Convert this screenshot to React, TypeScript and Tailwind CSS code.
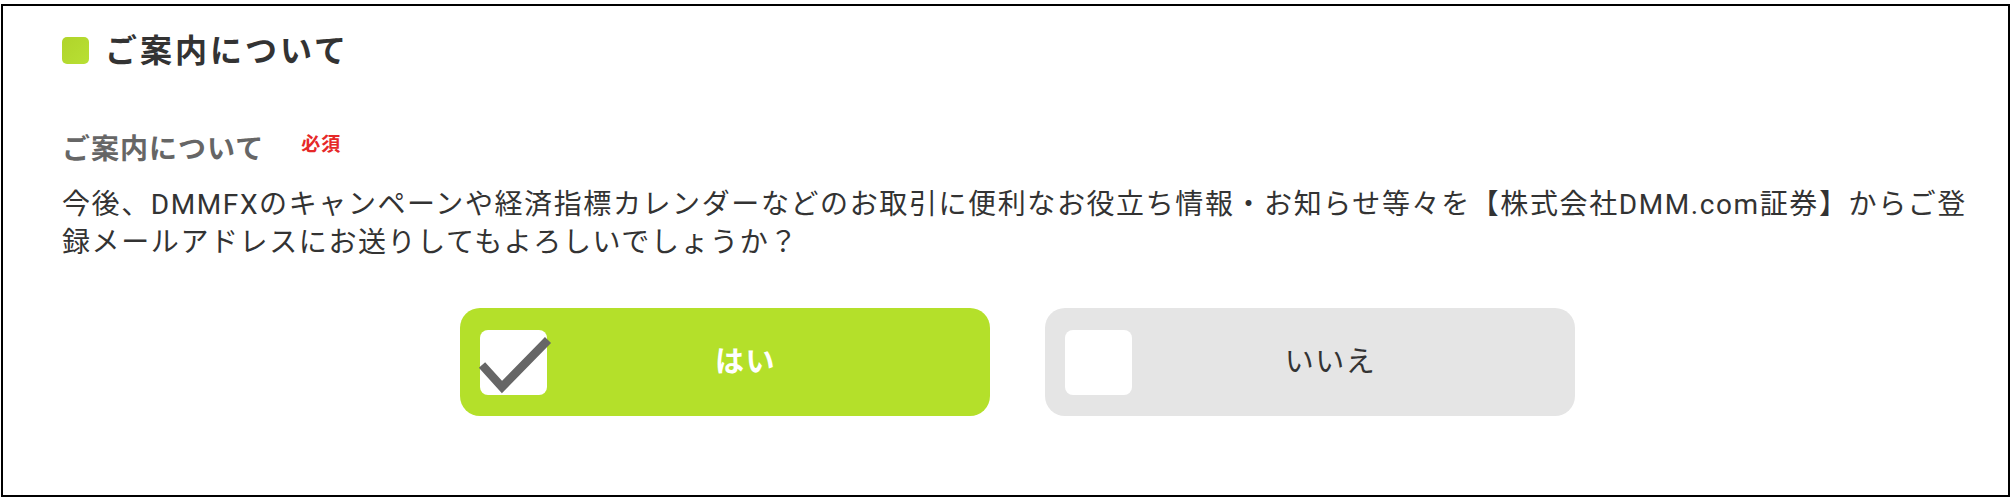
import React from 'react';

const font = "font-['Roboto','Noto_Sans_CJK_JP',sans-serif]";

const ChoiceButton: React.FC<{ label: string; checked: boolean }> = ({ label, checked }) => {
  return (
    <div
      className={`relative flex h-[108px] w-[530px] items-center justify-center rounded-[20px] pl-[42px] ${
        checked ? 'bg-[#b4e02a]' : 'bg-[#e5e5e5]'
      }`}
    >
      <div className="absolute left-[20px] top-[22px] h-[65px] w-[67px] rounded-[8px] bg-white"></div>
      {checked && (
        <svg className="absolute left-0 top-0 overflow-visible" width="100" height="108" viewBox="0 0 100 108">
          <path d="M22 57 L42 79 L88 32" fill="none" stroke="#666666" strokeWidth="8.5" strokeLinejoin="miter" />
        </svg>
      )}
      <span
        className={`text-[29px] leading-[30px] tracking-[1.5px] ${
          checked ? 'font-bold text-white' : 'text-[#333333]'
        }`}
      >
        {label}
      </span>
    </div>
  );
};

const App: React.FC = () => {
  return (
    <div className={`${font} h-[502px] w-[2016px] bg-white pt-[4px] pl-[1px]`}>
      <div className="h-[493px] w-[2009px] border-2 border-black pl-[59px] pr-[36px] pt-[31px]">
        <div className="flex h-[27px] items-center gap-[16px]">
          <div className="h-[27px] w-[27px] rounded-[5px] bg-gradient-to-br from-[#b0d42a] to-[#b8e034]"></div>
          <h2 className="text-[32px] font-bold leading-[30px] tracking-[3px] text-[#333333]">ご案内について</h2>
        </div>

        <div className="mt-[71px] flex items-start">
          <h3 className="text-[28px] font-bold leading-[30px] tracking-[1px] text-[#666666]">ご案内について</h3>
          <span className="ml-[37px] mt-[1px] text-[19px] font-bold leading-[18px] tracking-[1px] text-[#e62828]">必須</span>
        </div>

        <p className="mt-[21px] text-[28px] leading-[38px] tracking-[1.6px] text-[#333333]">
          今後、DMMFXのキャンペーンや経済指標カレンダーなどのお取引に便利なお役立ち情報・お知らせ等々を【株式会社DMM.com証券】からご登録メールアドレスにお送りしてもよろしいでしょうか？
        </p>

        <div className="mt-[46px] flex justify-center gap-[55px]">
          <ChoiceButton label="はい" checked={true} />
          <ChoiceButton label="いいえ" checked={false} />
        </div>
      </div>
    </div>
  );
};

export default App;
